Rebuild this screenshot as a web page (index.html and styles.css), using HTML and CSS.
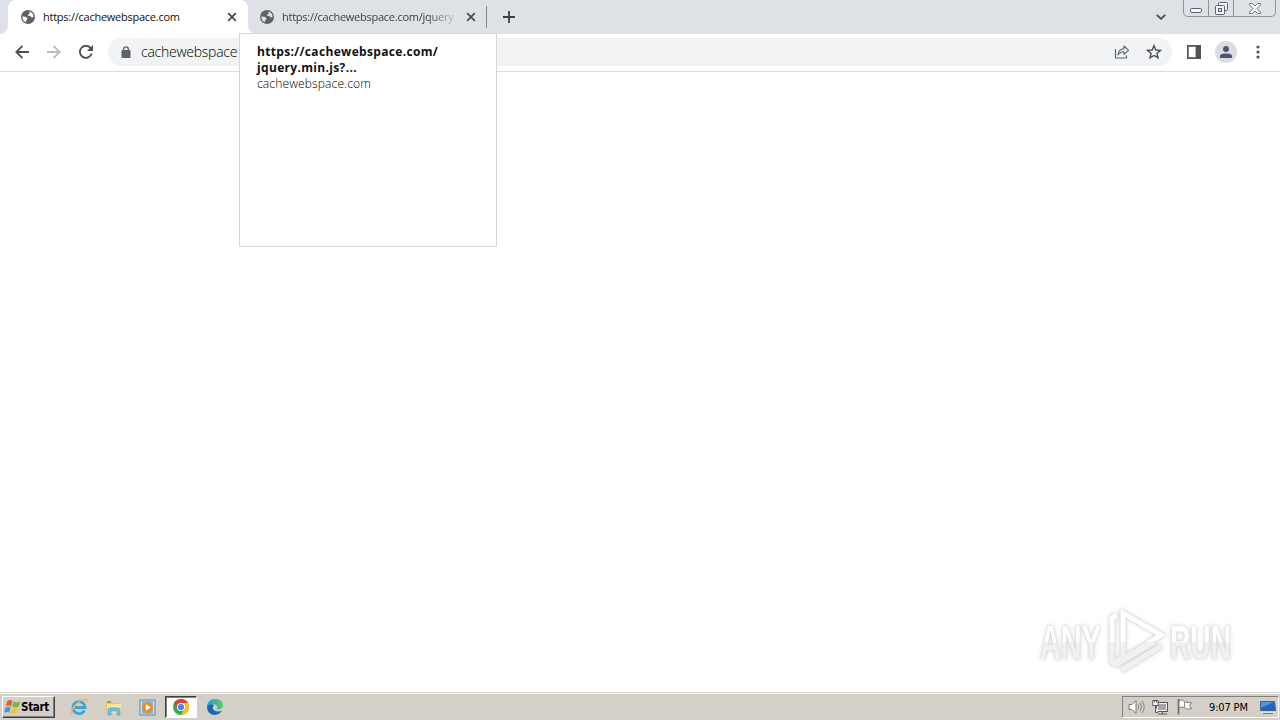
FILE: index.html
```html
<!DOCTYPE html>
<html lang="en">

<head>
    <meta charset="UTF-8">
    <title>cachewebspace.com</title>
    <link rel="stylesheet" href="styles.css">
</head>

<body>
    <div class="desktop">
        <div class="tab-strip">
            <div class="tab active">
                <svg class="globe" width="14" height="14" viewBox="0 0 14 14">
                    <circle cx="7" cy="7" r="7" fill="#5f6368" />
                    <path d="M1.5 6.2L5 7 6.4 8.2 6.1 9.7 5.2 10.2 5 12.2A5.6 5.6 0 0 1 1.5 6.2ZM8 1.5A5.7 5.7 0 0 1 12.6 7L10.5 7.4 9.4 6.1 7 5.7 7.2 4.5 8.8 3.7Z" fill="#fff" />
                </svg>
                <span class="tab-title">https://cachewebspace.com</span>
                <svg class="close" width="10" height="10" viewBox="0 0 10 10">
                    <path d="M1.2 1.2L8.8 8.8M8.8 1.2L1.2 8.8" stroke="#45494d" stroke-width="1.7" />
                </svg>
            </div>
            <div class="tab">
                <svg class="globe" width="14" height="14" viewBox="0 0 14 14">
                    <circle cx="7" cy="7" r="7" fill="#5f6368" />
                    <path d="M1.5 6.2L5 7 6.4 8.2 6.1 9.7 5.2 10.2 5 12.2A5.6 5.6 0 0 1 1.5 6.2ZM8 1.5A5.7 5.7 0 0 1 12.6 7L10.5 7.4 9.4 6.1 7 5.7 7.2 4.5 8.8 3.7Z" fill="#dee1e6" />
                </svg>
                <span class="tab-title fade">https://cachewebspace.com/jquery</span>
                <svg class="close" width="10" height="10" viewBox="0 0 10 10">
                    <path d="M1.2 1.2L8.8 8.8M8.8 1.2L1.2 8.8" stroke="#45494d" stroke-width="1.7" />
                </svg>
            </div>
            <svg class="new-tab" width="12" height="12" viewBox="0 0 12 12">
                <path d="M6 0V12M0 6H12" stroke="#3c4043" stroke-width="1.8" />
            </svg>
            <svg class="tab-search" width="10" height="6" viewBox="0 0 10 6">
                <path d="M.8.8L5 4.8 9.2.8" fill="none" stroke="#45494d" stroke-width="1.8" />
            </svg>
            <div class="window-buttons">
                <div class="win-btn min">
                    <svg width="13" height="5" viewBox="0 0 13 5">
                        <rect x=".5" y=".5" width="11" height="4" rx="1.3" fill="#f5f6f7" stroke="#5b616c" />
                    </svg>
                </div>
                <div class="win-btn max">
                    <svg width="13" height="13" viewBox="0 0 13 13">
                        <rect x="3.5" y=".5" width="9" height="8" rx="1" fill="#f2f3f5" stroke="#5b616c" />
                        <rect x=".5" y="3.5" width="9" height="9" rx="1" fill="#f2f3f5" stroke="#5b616c" />
                        <rect x="3.5" y="6.5" width="3" height="3" fill="#dee1e6" stroke="#5b616c" />
                    </svg>
                </div>
                <div class="win-btn quit">
                    <svg width="12" height="11" viewBox="0 0 12 11">
                        <path d="M.5.5H3.5L6 3 8.5.5H11.5V2L8 5.5 11.5 9V10.5H8.5L6 8 3.5 10.5H.5V9L4 5.5.5 2Z" fill="#f2f3f5" stroke="#6b7079" stroke-width=".9" />
                    </svg>
                </div>
            </div>
        </div>

        <div class="toolbar">
            <svg class="nav back" width="14" height="14" viewBox="0 0 14 14">
                <path d="M14 7H1.5M7.5.8L1.3 7 7.5 13.2" fill="none" stroke="#4a4d51" stroke-width="1.8" />
            </svg>
            <svg class="nav forward" width="14" height="14" viewBox="0 0 14 14">
                <path d="M0 7H12.5M6.5.8L12.7 7 6.5 13.2" fill="none" stroke="#babcbe" stroke-width="1.8" />
            </svg>
            <svg class="nav reload" width="14" height="14" viewBox="0 0 14 14">
                <path d="M11.6 3A6 6 0 1 0 12.7 8.5" fill="none" stroke="#4a4d51" stroke-width="1.8" />
                <path d="M14 0V6H8Z" fill="#4a4d51" />
            </svg>
            <div class="address-bar">
                <svg class="lock" width="10" height="12" viewBox="0 0 10 12">
                    <rect x=".5" y="4" width="9" height="8" rx="1" fill="#5f6368" />
                    <path d="M2.6 5V3.2A2.4 2.4 0 0 1 7.4 3.2V5" fill="none" stroke="#5f6368" stroke-width="1.3" />
                </svg>
                <span class="url">cachewebspace</span>
                <svg class="share" width="16" height="14" viewBox="0 0 16 14">
                    <path d="M1.5 4V13H12.5V10.5" fill="none" stroke="#5f6368" stroke-width="1.2" />
                    <path d="M4 10C4.3 6.5 6.5 4 10 3.8V1L14.6 5.4 10 9.3V6.8C7.5 6.8 5.5 7.7 4 10Z" fill="none" stroke="#5f6368" stroke-width="1.1" stroke-linejoin="round" />
                </svg>
                <svg class="star" width="16" height="16" viewBox="0 0 16 16">
                    <path d="M8 1.7L9.8 6 14.4 6.4 10.9 9.4 12 13.9 8 11.5 4 13.9 5.1 9.4 1.6 6.4 6.2 6Z" fill="none" stroke="#4a4d51" stroke-width="1.4" />
                </svg>
            </div>
            <svg class="panel" width="14" height="14" viewBox="0 0 14 14">
                <path d="M0 0H14V14H0ZM1.7 1.7V12.3H8.6V1.7Z" fill="#505357" fill-rule="evenodd" />
            </svg>
            <div class="avatar">
                <svg width="12" height="12" viewBox="0 0 12 12">
                    <circle cx="6" cy="3" r="3" fill="#4a5670" />
                    <path d="M0 12V10C0 6.8 12 6.8 12 10V12Z" fill="#4a5670" />
                </svg>
            </div>
            <svg class="menu" width="4" height="14" viewBox="0 0 4 14">
                <circle cx="2" cy="2" r="1.6" fill="#505357" />
                <circle cx="2" cy="7" r="1.6" fill="#505357" />
                <circle cx="2" cy="12" r="1.6" fill="#505357" />
            </svg>
        </div>

        <div class="page"></div>

        <div class="taskbar">
            <div class="start">
                <svg width="17" height="16" viewBox="0 0 16 15">
                    <path d="M3 2C5 .6 6.5.8 8 1.8L6.6 6.8C5 5.8 3.4 5.9 1.6 6.9Z" fill="#e3632b" />
                    <path d="M9 2.3C11 3.4 13 3.2 15.3 2L13.8 7C11.8 8.2 9.6 8.2 7.6 7.2Z" fill="#79b741" />
                    <path d="M1.3 8C3 7 4.8 7 6.3 8L4.9 13C3.4 12 1.6 12 0 13Z" fill="#469cda" />
                    <path d="M7.3 8.4C9.2 9.4 11.4 9.4 13.5 8.2L12 13.2C9.8 14.4 7.6 14.3 5.9 13.4Z" fill="#f6c332" />
                </svg>
                <span>Start</span>
            </div>
            <div class="launcher">
                <div class="app">
                    <svg width="18" height="18" viewBox="0 0 18 18">
                        <path d="M14.4 12.3A6 6 0 1 1 15 9.5H5" fill="none" stroke="#3ba4dc" stroke-width="2.8" />
                        <path d="M2.3 16.5C-1 14 6 4.5 12.5 2 16 .6 17.6 1.7 16.7 4.2" fill="none" stroke="#edbd3c" stroke-width="1.3" />
                    </svg>
                </div>
                <div class="app">
                    <svg width="17" height="17" viewBox="0 0 17 17">
                        <path d="M1 3H7L8 4H15V14H1Z" fill="#e9c75c" />
                        <path d="M2 2H6V4H2Z" fill="#74b463" />
                        <path d="M2 5H16V14H2Z" fill="#f8e59c" />
                        <path d="M3 16V11Q3 9 5 9H13Q15 9 15 11V16H12V12H6V16Z" fill="#76bfe3" stroke="#4d99be" stroke-width=".6" />
                    </svg>
                </div>
                <div class="app">
                    <svg width="17" height="17" viewBox="0 0 17 17">
                        <rect x="1" y="1" width="15" height="15" fill="#c4e0f5" stroke="#548ab6" />
                        <rect x="3" y="2" width="11" height="13" fill="#86b7df" />
                        <circle cx="8.5" cy="8.5" r="5.5" fill="#f18a1b" />
                        <path d="M6.8 5.2L11.8 8.5 6.8 11.8Z" fill="#fff" />
                    </svg>
                </div>
                <div class="app pressed">
                    <svg width="16" height="16" viewBox="0 0 16 16">
                        <circle cx="8" cy="8" r="8" fill="#34a853" />
                        <path d="M8 8L1.1 4A8 8 0 0 1 14.9 4Z" fill="#df4335" />
                        <path d="M8 4H14.9A8 8 0 0 1 8 16L11.5 10Z" fill="#fbc116" />
                        <path d="M1.1 4L4.5 10 8 4Z" fill="#df4335" />
                        <circle cx="8" cy="8" r="4" fill="#fff" />
                        <circle cx="8" cy="8" r="3.1" fill="#4285f4" />
                    </svg>
                </div>
                <div class="app">
                    <svg width="16" height="16" viewBox="0 0 16 16">
                        <defs>
                            <linearGradient id="edge" x2="1">
                                <stop offset="0" stop-color="#209fdc" />
                                <stop offset="1" stop-color="#58cd66" />
                            </linearGradient>
                        </defs>
                        <path d="M0 8C0-2.7 16-2.5 16 6.5 16 9.5 12.5 11.3 9.5 10 11 8.5 10.2 5.5 6.5 5.2 3.5 5 1 6 0 8Z" fill="url(#edge)" />
                        <path d="M0 8C1 5.5 5 4.5 7 6.2 3.8 9.5 7 14 15 12.1 9.5 19 0 16 0 8Z" fill="#1667b7" />
                    </svg>
                </div>
            </div>
            <div class="tray">
                <svg class="speaker" width="18" height="16" viewBox="0 0 18 16">
                    <path d="M1 5.5H4L8 1.5V14.5L4 10.5H1Z" fill="#fff" stroke="#767676" />
                    <path d="M10 5.5Q11.7 8 10 10.5M12 3.7Q15 8 12 12.3M14 2Q18.4 8 14 14" fill="none" stroke="#858585" />
                </svg>
                <svg class="network" width="17" height="16" viewBox="0 0 17 16">
                    <rect x="4.5" y="3.5" width="11" height="9" fill="#eee" stroke="#555" />
                    <rect x="6" y="5" width="8" height="6" fill="#a5a5a5" />
                    <path d="M10.5 13V15M6 15H15" stroke="#555" />
                    <path d="M.8 1.5H6.2V6.5H.8ZM3.5 7V13.5H6M2.5 1V3.5M4.5 1V3.5" fill="#fff" stroke="#555" />
                </svg>
                <svg class="flag" width="17" height="16" viewBox="0 0 17 16">
                    <path d="M2.5 0V15.5" stroke="#666" stroke-width="1.6" />
                    <path d="M3 1.5C5.5.4 7 1 8.5 2.8L15.5 3.8 13.5 6.5 15.5 9.6C12 10.6 10 10 8.5 8.7 6.5 7.7 5 8 3 9Z" fill="#fff" stroke="#777" />
                    <path d="M8.5 3V8.7" stroke="#888" />
                </svg>
                <span class="clock">9:07 PM</span>
                <svg class="screen" width="16" height="14" viewBox="0 0 16 14">
                    <path d="M.5 1.5H14.5L15.5 10.5H.5Z" fill="#2063bb" stroke="#47627f" />
                    <path d="M1 2H14L1 8Z" fill="#5595df" />
                    <path d="M1 12.5H15" stroke="#dce5ef" />
                    <path d="M3 13.5H13" stroke="#777" />
                </svg>
            </div>
        </div>

        <div class="hover-card">
            <p class="card-title">https://cachewebspace.com/<br>jquery.min.js?...</p>
            <p class="card-domain">cachewebspace.com</p>
        </div>

        <svg class="watermark" width="220" height="80" viewBox="0 0 220 80">
            <defs>
                <linearGradient id="shade" gradientUnits="userSpaceOnUse" x1="0" y1="0" x2="0" y2="80">
                    <stop offset=".48" stop-color="#fff" />
                    <stop offset=".49" stop-color="#f1f1f1" />
                </linearGradient>
            </defs>
            <text x="10" y="56" textLength="61" lengthAdjust="spacingAndGlyphs">ANY</text>
            <text x="140" y="56" textLength="61" lengthAdjust="spacingAndGlyphs">RUN</text>
            <path d="M93 54V10L131 32 96 54M82 61V15L87 12M82 61L92 55M85 62L124 39M92 67L131 43" fill="none" stroke="url(#shade)" stroke-width="5" />
        </svg>
    </div>
</body>

</html>
```
FILE: styles.css
```css
body {
    margin: 0;
    font-family: "Open Sans", "Noto Sans", sans-serif;
    color: #111214;
    background-color: #fff;
    overflow: hidden;
}

svg {
    display: block;
    flex: none;
}

p {
    margin: 0;
}

.desktop {
    position: relative;
    width: 1280px;
    height: 720px;
    display: flex;
    flex-direction: column;
}

.tab-strip {
    height: 34px;
    box-sizing: border-box;
    display: flex;
    align-items: center;
    padding-left: 8px;
    background-color: #dee1e6;
}

.tab {
    height: 34px;
    width: 239px;
    box-sizing: border-box;
    display: flex;
    align-items: center;
    padding: 0 10px 0 12px;
    border-right: 1px solid #85888d;
    border-image: linear-gradient(transparent 7px, #85888d 7px, #85888d 27px, transparent 27px) 1;
}

.tab.active {
    position: relative;
    width: 240px;
    padding: 0 11px 0 13px;
    border: none;
    border-radius: 8px 8px 0 0;
    background-color: #fff;
}

.tab.active::before,
.tab.active::after {
    content: "";
    position: absolute;
    bottom: 0;
    width: 8px;
    height: 8px;
}

.tab.active::before {
    left: -8px;
    background: radial-gradient(circle at 0 0, transparent 7.5px, #fff 8px);
}

.tab.active::after {
    right: -8px;
    background: radial-gradient(circle at 100% 0, transparent 7.5px, #fff 8px);
}

.tab-title {
    flex: 1;
    margin: 0 10px 0 8px;
    font-size: 11px;
    letter-spacing: -0.25px;
    line-height: 16px;
    white-space: nowrap;
}

.tab-title.fade {
    color: #3c4043;
    -webkit-mask-image: linear-gradient(90deg, #000 145px, transparent 177px);
    mask-image: linear-gradient(90deg, #000 145px, transparent 177px);
}

.new-tab {
    margin-left: 16px;
}

.tab-search {
    margin-left: auto;
}

.window-buttons {
    display: flex;
    align-self: flex-start;
    height: 17px;
    width: 93px;
    box-sizing: border-box;
    margin: 0 4px 0 17px;
    border: 1px solid #8e929a;
    border-top: none;
    border-radius: 0 0 5px 5px;
}

.win-btn {
    display: flex;
    justify-content: center;
    align-items: center;
    width: 24px;
    border-right: 1px solid #8e929a;
}

.win-btn.min {
    padding-top: 4px;
    height: 12px;
}

.win-btn.quit {
    flex: 1;
    border: none;
}

.toolbar {
    height: 38px;
    box-sizing: border-box;
    display: flex;
    align-items: center;
    padding: 0 20px 1px 15px;
    border-bottom: 1px solid #dadce0;
    background-color: #fff;
}

.nav {
    margin-right: 18px;
}

.nav.reload {
    margin-right: 15px;
}

.address-bar {
    flex: 1;
    height: 28px;
    display: flex;
    align-items: center;
    padding: 0 10px 0 13px;
    border-radius: 14px;
    background-color: #f1f3f4;
}

.url {
    margin-left: 10px;
    flex: 1;
    font-size: 14px;
    letter-spacing: -0.25px;
    font-weight: 300;
    line-height: 18px;
    color: #000;
}

.share {
    margin-right: 16px;
}

.panel {
    margin: 0 14px 0 15px;
}

.avatar {
    width: 22px;
    height: 22px;
    margin-right: 19px;
    display: flex;
    align-items: center;
    justify-content: center;
    border-radius: 50%;
    background-color: #dadde2;
}

.page {
    flex: 1;
    background-color: #fff;
}

.taskbar {
    height: 28px;
    box-sizing: border-box;
    display: flex;
    align-items: center;
    padding: 1px 1px 0 2px;
    border-top: 1px solid #d4d0c8;
    box-shadow: inset 0 1px #fff;
    background-color: #d4d0c8;
}

.start {
    width: 53px;
    height: 22px;
    box-sizing: border-box;
    display: flex;
    align-items: center;
    padding-left: 1px;
    border: 1px solid;
    border-color: #fff #404040 #404040 #fff;
    box-shadow: inset -1px -1px #808080;
    font-family: "DejaVu Sans Condensed", "DejaVu Sans", sans-serif;
    font-size: 11.5px;
    font-weight: bold;
    color: #000;
}

.start span {
    font-stretch: condensed;
    letter-spacing: -0.3px;
}

.launcher {
    display: flex;
    flex: 1;
    gap: 2px;
    margin-left: 8px;
}

.app {
    width: 32px;
    height: 22px;
    box-sizing: border-box;
    display: flex;
    align-items: center;
    justify-content: center;
}

.app.pressed {
    border: 1px solid;
    border-color: #404040 #fff #fff #404040;
    box-shadow: inset 1px 1px #808080;
    background-color: #fff;
}

.tray {
    width: 157px;
    height: 22px;
    box-sizing: border-box;
    display: flex;
    align-items: center;
    padding-left: 5px;
    border: 1px solid;
    border-color: #808080 #fff #fff #808080;
}

.network {
    margin-left: 6px;
}

.flag {
    margin-left: 7px;
}

.clock {
    width: 43px;
    margin: 0 8px 0 16px;
    font-family: "DejaVu Sans Condensed", "DejaVu Sans", sans-serif;
    font-stretch: condensed;
    font-size: 11px;
    letter-spacing: -0.15px;
    white-space: nowrap;
    color: #000;
}

.hover-card {
    position: absolute;
    left: 239px;
    top: 33px;
    width: 258px;
    height: 214px;
    box-sizing: border-box;
    padding: 10px 17px;
    border: 1px solid #d5d6d8;
    background-color: #fff;
    font-size: 12px;
    line-height: 16px;
}

.card-title {
    font-weight: bold;
    letter-spacing: 0.33px;
    white-space: nowrap;
}

.card-domain {
    font-weight: 300;
    letter-spacing: 0.15px;
    color: #000;
}

.watermark {
    position: absolute;
    left: 1030px;
    top: 603px;
    font-family: "Liberation Sans", Arial, sans-serif;
    font-size: 48px;
    font-weight: bold;
    fill: url(#shade);
    filter: drop-shadow(0 0 1px #d0d0d0) drop-shadow(0 0 2px #dedede);
}
```
